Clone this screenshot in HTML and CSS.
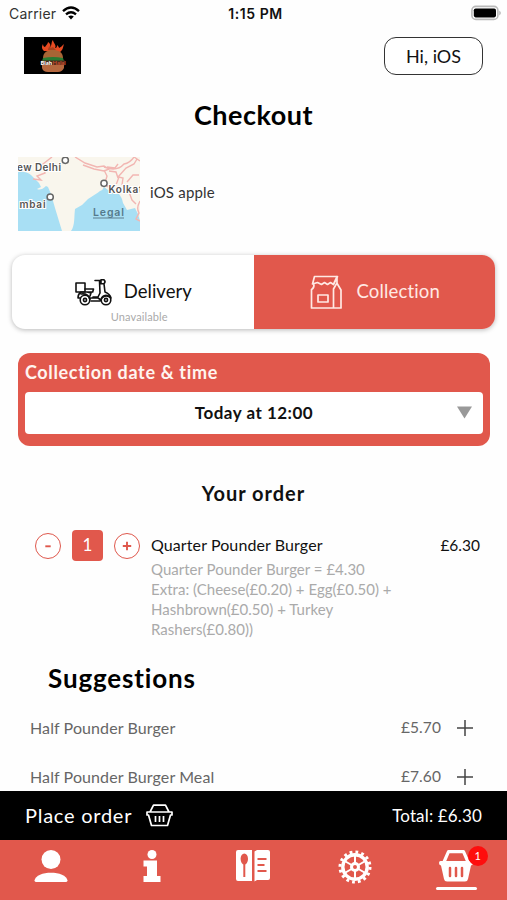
FILE: index.html
```html
<!DOCTYPE html>
<html lang="en">
<head>
<meta charset="utf-8">
<title>Checkout</title>
<link rel="stylesheet" href="styles.css">
</head>
<body>
<div class="app">
  <div class="status">
    <div class="carrier"><span>Carrier</span>
      <svg width="18" height="14" viewBox="0 0 18 14" fill="none" stroke="#000" stroke-width="2.4"><path d="M1 5.2Q9-2 17 5.2M4 8.4q5-4.2 10 0"/><path d="M6.2 10.6q2.8-2 5.6 0L9 13.6z" fill="#000" stroke="none"/></svg>
    </div>
    <span class="clock">1:15 PM</span>
    <svg class="battery" width="32" height="16" viewBox="0 0 32 16"><rect x="1.900" y="1.400" width="26" height="13" rx="4" fill="#fff" stroke="#b9b9b9" stroke-width="1.6"/><rect x="3.800" y="3.400" width="22.2" height="9" rx="1.8"/><path d="M29.300 5.500q3 2.5 0 5z" fill="#b0b0b0"/></svg>
  </div>

  <main class="content">
    <header class="header">
      <svg class="logo" width="57" height="37" viewBox="0 0 57 37">
        <rect width="57" height="37"/>
        <path d="M20 14c-3-3-2-5-1-7 0 2 1 3 2 3 1-2 3-3 3-5 2 1 3 3 2 5 2-1 1-5 3-7 0 3 4 5 2 8 2 0 2-2 2-3 1 1 2 2 2 3 2-1 3-2 5-4-1 3-1 6-4 8z" fill="#e84b22"/>
        <path d="M24 13c0-2 1-3 2-4 0 2 1 2 3 1l3 3z" fill="#a9421f"/>
        <path d="M19 21c0-6 5-8 10-8s10 2 10 8z" fill="#a76535"/>
        <path d="M19 21q10-2 20 0l1 3H18z" fill="#287b32"/>
        <rect x="17" y="23.5" width="24" height="4.8" fill="#49291b"/>
        <path d="M18 28h22v3q-2 4-6 4H24q-5 0-6-4z" fill="#b5683f"/>
        <text class="logo-text" x="16.5" y="27.8" fill="#fff">Blah</text><text class="logo-text" x="28.5" y="27.8" fill="#c04c2c">Halal</text>
      </svg>
      <button class="greeting">Hi, iOS</button>
    </header>

    <h1 class="title">Checkout</h1>

    <section class="place">
      <svg class="map" width="122" height="74" viewBox="0 0 122 74">
        <rect width="122" height="74" fill="#f9f6ed"/>
        <path d="M0 15q8-1 13 3l8 8 2 4-4 2q4 2 9-3l2 1 3 7 4 14 7 23H0z" fill="#a8dff4"/>
        <path d="M53 74c4-5 3-14 4-22l7-4 6-6q8-5 12-8 3-1 4-4l4 3 10 3q4 4 5 10l4 7 8-2 3 6 2 7v12z" fill="#a8dff4"/>
        <path d="M92 30l12 3q5 8 5 15 5 4 13 1V28z" fill="#f9f6ed"/>
        <g fill="none" stroke="#f2b6b2" stroke-width="1.4"><path d="M34 0l-9 7 2 9-8 3 4 4-8-1M57 0l10 6 12 4 7-1 5 3-5 2-10-2-11-4M86 10q13 5 20-3 6-1 10-7l6 4M86 13l3 6-2 7 3 4M91 14l7 1 2 6M100 20l8-9 8-4 3-5M98 28l3-8 4 1-1 7M109 25l6-7 6 0M111 35l3 8 4 4M122 44q-4 7-1 12l-3 6 4 2M100 7l-3 4-8-1"/></g>
        <g fill="#fff" stroke="#666" stroke-width="1.5"><circle cx="47.3" cy="3.3" r="3.1"/><circle cx="86" cy="26.3" r="3.1"/><circle cx="32.2" cy="40" r="3.1"/></g>
        <g class="map-label"><text x="-1" y="13.5" textLength="44">ew Delhi</text><text x="90.5" y="36.2" textLength="34">Kolkat</text><text x="1.5" y="50.5" textLength="26">mbai</text></g>
        <text class="map-legal" x="75" y="59" textLength="31">Legal</text>
        <path d="M75 61h31" stroke="#5c7f8f" stroke-width="1"/>
      </svg>
      <span class="place-name">iOS apple</span>
    </section>

    <section class="modes">
      <div class="mode">
        <div class="mode-main">
          <svg width="37" height="27" viewBox="0 0 37 27" fill="none" stroke="#111" stroke-width="1.6" stroke-linejoin="round" stroke-linecap="round"><rect x="1" y="4" width="9" height="9"/><path d="M10 10h8.500l-.8 3H6M6 13q-3 2-3 6h2M20 1.500h6M26 .8h3q2 2 0 4h-3zM24.500 2l.5 12-2 4h-5M14 19h9l3 2M29 5l1 8q5 2 6 6-5-4-9 0l-2 3h-9M6 15q7-1 9 5M12 13l4 1-1 3"/><circle cx="10" cy="21" r="4.800"/><circle cx="10" cy="21" r="1.600"/><circle cx="31" cy="21" r="4.800"/><circle cx="31" cy="21" r="1.600"/></svg>
          <span class="delivery-label">Delivery</span>
        </div>
        <small class="unavailable">Unavailable</small>
      </div>
      <div class="mode mode-active">
        <div class="mode-main">
          <svg width="33" height="35" viewBox="0 0 33 35" fill="none" stroke="#ffe9e4" stroke-width="1.700" stroke-linejoin="round"><path d="M4.500 1.500h23l-4 8-3-2-3 2-3-2-3 2-4-2-5 1.500zM4 9.500q0 4-2.500 5V33H31V15l-4.500-7.500M23.500 9L27 1.500v6.300L23.500 14v19M8 20h10v7H8z"/></svg>
          <span class="collection-label">Collection</span>
        </div>
      </div>
    </section>

    <section class="schedule">
      <h2 class="schedule-title">Collection date &amp; time</h2>
      <div class="select"><span>Today at 12:00</span><svg width="15" height="13" viewBox="0 0 15 13"><path d="M0 .5h15l-7.500 12z" fill="#999"/></svg></div>
    </section>

    <h2 class="order-title">Your order</h2>
    <section class="order-row">
      <div class="stepper">
        <button class="round"><svg width="26" height="26" viewBox="0 0 26 26"><path d="M10.300 13.300h5.400" stroke="#df584d" stroke-width="1.900"/></svg></button>
        <span class="count">1</span>
        <button class="round"><svg width="26" height="26" viewBox="0 0 26 26"><path d="M8.800 13h8.400M13 8.800v8.400" stroke="#df584d" stroke-width="1.900"/></svg></button>
      </div>
      <div class="item">
        <span class="item-name">Quarter Pounder Burger</span>
        <p class="item-detail">Quarter Pounder Burger = £4.30<br>Extra: (Cheese(£0.20) + Egg(£0.50) +<br>Hashbrown(£0.50) + Turkey<br>Rashers(£0.80))</p>
      </div>
      <span class="item-price">£6.30</span>
    </section>

    <h2 class="suggest-title">Suggestions</h2>
    <div class="suggestion"><span class="name">Half Pounder Burger</span><span class="price">£5.70</span><svg width="16" height="16" viewBox="0 0 16 16"><path d="M0 8h16M8 0v16" stroke="#444" stroke-width="1.500"/></svg></div>
    <div class="suggestion"><span class="name">Half Pounder Burger Meal</span><span class="price">£7.60</span><svg width="16" height="16" viewBox="0 0 16 16"><path d="M0 8h16M8 0v16" stroke="#444" stroke-width="1.500"/></svg></div>
  </main>

  <div class="place-order">
    <span class="place-label">Place order</span>
    <svg width="27" height="23" viewBox="0 0 27 23" fill="none" stroke="#fff" stroke-width="1.700" stroke-linejoin="round"><path d="M4 8l3.500-6.800h12L23 8M1 8h25v3h-1.500l-3 10.500h-16L2.500 11H1zM9.500 12v6M13.500 12v6M17.500 12v6"/></svg>
    <span class="total">Total: £6.30</span>
  </div>

  <nav class="tabs">
    <a class="tab"><svg width="34" height="34" viewBox="0 0 34 34" fill="#fff"><circle cx="17" cy="9.500" r="9.500"/><path d="M.5 30.500C2 20 32 20 33.500 30.500q0 1.500-2 1.500h-29q-2 0-2-1.500z"/></svg></a>
    <a class="tab"><svg width="20" height="34" viewBox="0 0 20 34" fill="#fff"><circle cx="10" cy="4.500" r="4.500"/><path d="M1.500 10.500H15V26h3.500v6h-17v-6H5v-9.500H1.500z"/></svg></a>
    <a class="tab"><svg width="34" height="34" viewBox="0 0 34 34"><path d="M2 0h14v31H2q-2 0-2-2V2q0-2 2-2zM18.500 1.500L21 0h11q2 0 2 2v26q0 2-2 2H21l-2.500 1.500z" fill="#fff"/><ellipse cx="8.300" cy="9" rx="3.700" ry="5.500" fill="#e1584c"/><path d="M8.300 13v14" stroke="#e1584c" stroke-width="2"/><path d="M21.500 9h9M21.500 15h7M21.500 21h9" stroke="#e1584c" stroke-width="2"/></svg></a>
    <a class="tab"><svg width="34" height="34" viewBox="0 0 34 34" fill="none" stroke="#fff"><circle cx="17" cy="17" r="12.200" stroke-width="3.400"/><circle cx="17" cy="17" r="15" stroke-width="3" stroke-dasharray="2.800 3.090"/><circle cx="17" cy="17" r="3.500" stroke-width="3"/><path d="M17 5v8M17 21v8M6.600 11l7 4M20.400 19l7 4M6.600 23l7-4M20.400 15l7-4" stroke-width="2"/></svg></a>
    <a class="tab tab-current"><svg width="34" height="34" viewBox="0 0 34 34"><path d="M5 12L9.500 1.700h15L29 12" fill="none" stroke="#fff" stroke-width="3.200" stroke-linejoin="round"/><path d="M1.500 11h31q1.500 0 1.500 2t-2 2.500L29 29q-.5 2.500-3 2.500H8q-2.500 0-3-2.500L2 15.500Q0 15 0 13t1.500-2z" fill="#fff"/><path d="M11 18v8M17 18v8M23 18v8" stroke="#e1584c" stroke-width="2.500" stroke-linecap="round"/></svg><span class="badge">1</span></a>
  </nav>
</div>
</body>
</html>
```
FILE: styles.css
```css
* { box-sizing: border-box; }
body { margin: 0; background: #fefefe; color: #111; font-family: Lato, "Liberation Sans", sans-serif; font-variant-ligatures: none; }
h1, h2, p { margin: 0; }
svg { display: block; flex: none; }
button { padding: 0; background: #fff; font: inherit; color: inherit; }
.app { width: 507px; height: 900px; display: flex; flex-direction: column; overflow: hidden; }

.status { height: 28px; display: grid; grid-template-columns: 1fr auto 1fr; align-items: center; padding: 0 5px 1px 9px; font-family: Inter, sans-serif; font-size: 14px; flex: none; }
.carrier { display: flex; gap: 6px; align-items: center; letter-spacing: .2px; color: #333; }
.carrier svg { margin-top: -2px; }
.clock { font-weight: 600; font-size: 14px; letter-spacing: .55px; }
.battery { justify-self: end; margin-top: -1px; }

.content { flex: 1; min-height: 0; overflow: hidden; }
.header { display: flex; justify-content: space-between; padding: 9px 24px 0; }
.logo-text { font: 900 5.8px Lato, sans-serif; }
.greeting { width: 99px; height: 38px; padding-bottom: 1px; border: 1.5px solid #333; border-radius: 12px; font-size: 18px; }
.title { margin-top: 23px; text-align: center; font-size: 27px; line-height: 34px; letter-spacing: .5px; color: #000; }

.place { display: flex; align-items: center; gap: 10px; margin: 25px 18px 0; }
.map-label { font: 600 10px Inter, sans-serif; fill: #555; stroke: #fff; stroke-width: 2px; paint-order: stroke; }
.map-legal { font: 600 10.5px Inter, sans-serif; fill: #557a8c; }
.place-name { font-size: 15px; letter-spacing: .2px; padding-bottom: 4px; color: #333; }

.modes { display: flex; height: 74px; margin: 24px 12px 0; border-radius: 13px; box-shadow: 0 1px 5px rgba(0,0,0,.28); overflow: hidden; background: #fff; }
.mode { flex: 1; display: flex; flex-direction: column; align-items: center; }
.mode-active { background: #e1584c; color: #ffe9e4; }
.mode-main { display: flex; align-items: center; gap: 12px; height: 74px; font-size: 18.5px; }
.mode-main span { padding-bottom: 3px; }
.mode:first-child .mode-main { padding-left: 1px; }
.mode-active .mode-main { gap: 14px; padding-left: 1px; letter-spacing: .15px; }
.unavailable { margin-top: -19px; padding-left: 13px; font-size: 11px; line-height: 14px; letter-spacing: .1px; color: #aaa; }

.schedule { margin: 24px 17px 0 18px; height: 93px; padding: 7px 7px 0; background: #e1584c; border-radius: 12px; }
.schedule-title { font-size: 18px; line-height: 24px; color: #fff4ef; letter-spacing: .65px; }
.select { margin-top: 8px; height: 42px; padding-bottom: 2px; background: #fff; border-radius: 4px; display: grid; grid-template-columns: 26px 1fr 26px; align-items: center; font-size: 17px; font-weight: 700; letter-spacing: .5px; }
.select span { grid-column: 2; text-align: center; }

.order-title { margin-top: 34px; text-align: center; font-size: 20px; line-height: 26px; letter-spacing: 1px; }
.order-row { display: flex; align-items: flex-start; margin: 25px 27px 0 34px; }
.stepper { display: flex; align-items: center; gap: 11px; width: 117px; padding-left: 1px; margin-top: -1px; }
.round { width: 26px; height: 26px; border: 1.5px solid #df584d; border-radius: 50%; display: flex; align-items: center; justify-content: center; }
.count { width: 31px; height: 31px; border-radius: 4px; background: #e1584c; color: #fff; text-align: center; font-size: 17px; line-height: 30px; }
.item { flex: 1; }
.item-name { display: block; font-size: 16px; line-height: 28px; letter-spacing: .1px; }
.item-detail { font-size: 15px; line-height: 20px; letter-spacing: .02px; color: #aaa; white-space: nowrap; }
.item-price { font-size: 15.5px; line-height: 28px; }

.suggest-title { margin: 22px 0 0 48px; font-size: 26px; line-height: 34px; letter-spacing: .85px; color: #000; }
.suggestion { display: flex; align-items: center; height: 49px; padding: 0 34px 0 30px; font-size: 16px; letter-spacing: .1px; color: #666; }
.suggest-title + .suggestion { margin-top: 8px; }
.name, .price { padding-bottom: 1px; }
.price { margin-left: auto; margin-right: 16px; font-size: 15.5px; }

.place-order { height: 49px; flex: none; display: flex; align-items: center; padding: 0 25px; background: #000; color: #fff; font-size: 20px; }
.place-label { letter-spacing: .75px; padding-bottom: 2px; }
.place-order svg { margin-left: 14px; }
.total { margin-left: auto; font-size: 17px; letter-spacing: .15px; padding-bottom: 1px; }

.tabs { height: 60px; flex: none; display: grid; grid-template-columns: repeat(5, 1fr); background: #e1584c; }
.tab { position: relative; display: flex; flex-direction: column; align-items: center; padding-top: 10px; }
.tab-current::after { content: ""; width: 41px; height: 3px; margin-top: 3px; border-radius: 2px; background: #fff; }
.badge { position: absolute; top: 6px; left: 62px; width: 20px; height: 20px; border-radius: 50%; background: #fe0d0d; color: #fff; text-align: center; font-size: 11px; line-height: 20px; }
```
